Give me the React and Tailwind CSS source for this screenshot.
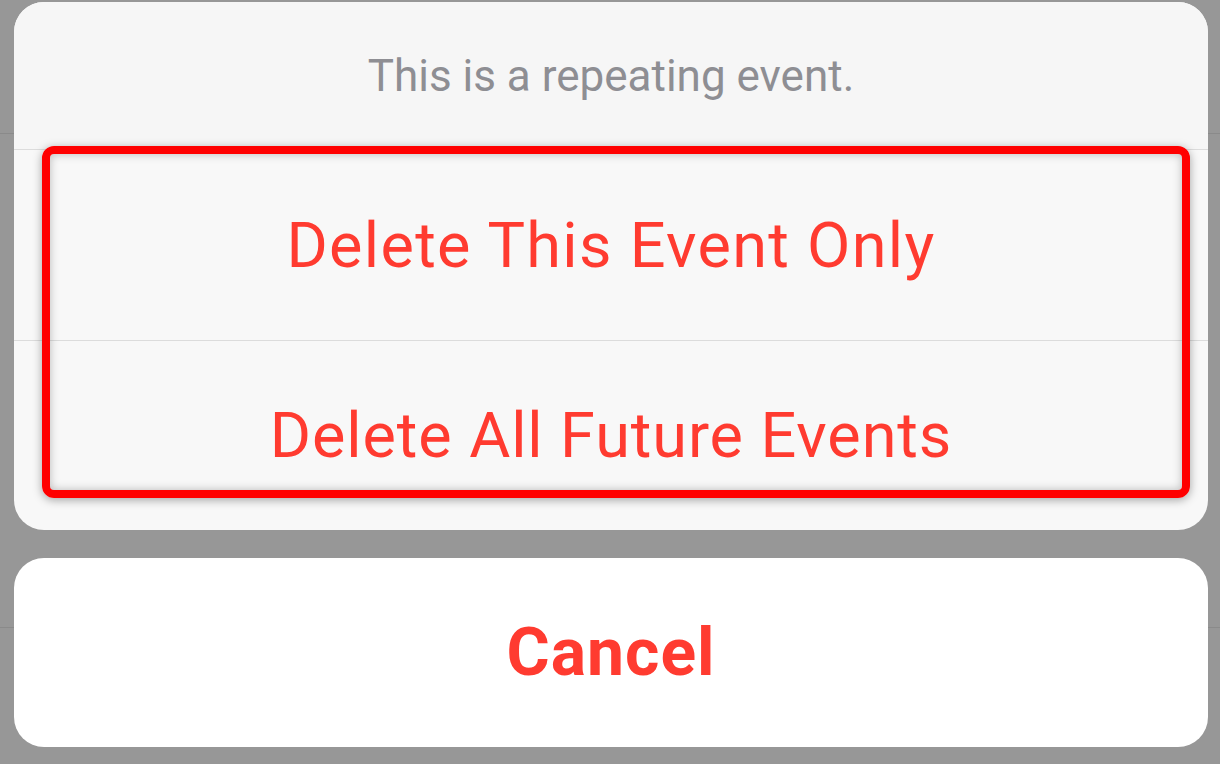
import React from 'react';

const ActionSheet = () => {
  return (
    <div className="relative h-[764px] w-[1220px] overflow-hidden bg-[#979797] px-[14px] pt-[2px] font-['Roboto',sans-serif]">
      {/* table rows peeking behind the sheet */}
      <div className="absolute left-0 right-0 top-[133px] h-px bg-[#8a8a8a]" />
      <div className="absolute left-0 right-0 top-[627px] h-px bg-[#8a8a8a]" />

      <div className="relative flex w-[1194px] flex-col overflow-hidden rounded-[30px] bg-[#f8f8f8]">
        <div className="flex h-[147px] items-center justify-center bg-[#f6f6f6]">
          <p className="text-[44px] leading-none text-[#8e8e93]">This is a repeating event.</p>
        </div>
        <div className="h-px bg-[#dcdcdc]" />
        <button className="flex h-[190px] items-center justify-center text-[63px] leading-none tracking-[1.3px] text-[#ff3b30]">
          Delete This Event Only
        </button>
        <div className="h-px bg-[#dcdcdc]" />
        <button className="flex h-[189px] items-center justify-center text-[63px] leading-none tracking-[0.9px] text-[#ff3b30]">
          Delete All Future Events
        </button>
      </div>

      <div className="relative mt-[28px] flex h-[189px] w-[1194px] items-center justify-center rounded-[30px] bg-white">
        <button className="text-[66px] font-bold leading-none tracking-[1px] text-[#ff3b30]">Cancel</button>
      </div>

      {/* red highlight annotation */}
      <div className="pointer-events-none absolute left-[42px] top-[146px] h-[352px] w-[1148px] rounded-[12px] border-[8px] border-[#ff0000] shadow-[0_2px_10px_rgba(0,0,0,0.35),inset_0_0_10px_rgba(0,0,0,0.25)]" />
    </div>
  );
};

export default function App() {
  return <ActionSheet />;
}
